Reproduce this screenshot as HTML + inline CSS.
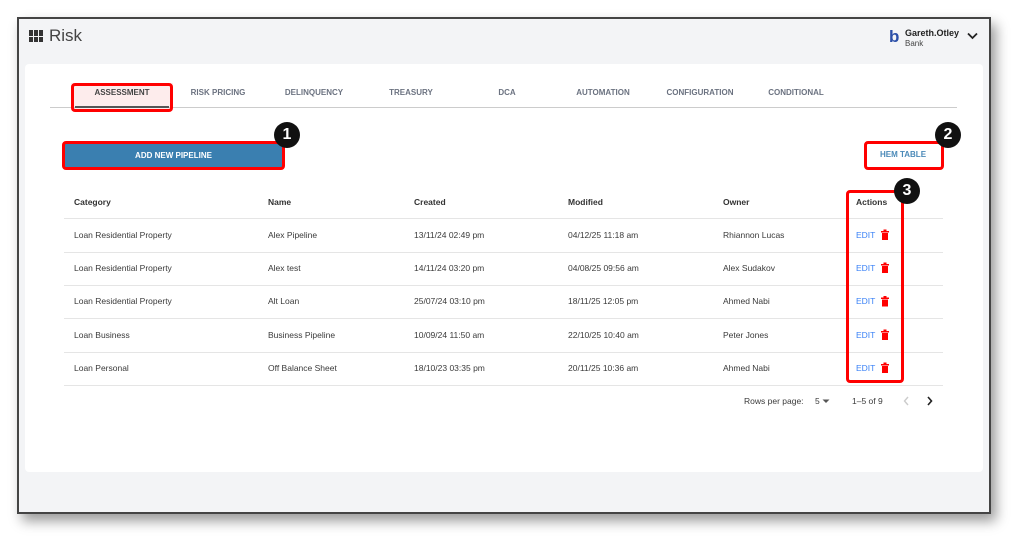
<!DOCTYPE html>
<html><head><meta charset="utf-8"><style>
*{box-sizing:border-box;margin:0;padding:0}
body{width:1024px;height:547px;background:#fff;font-family:"Liberation Sans",sans-serif;position:relative;overflow:hidden}
.a{position:absolute}
.frame{left:17px;top:17px;width:974px;height:497px;border:2px solid #444;background:#f3f4f6;box-shadow:5px 7px 12px rgba(0,0,0,.4)}
.card{left:25px;top:64px;width:958px;height:408px;background:#fff;border-radius:4px}
.tab{font-size:8px;font-weight:bold;color:#6b7280;width:96px;text-align:center;top:88px}
.t{font-size:8.5px;color:#3a3a3a}
.h{font-size:8.5px;font-weight:bold;color:#333}
.line{height:1px;background:#e5e5e5;left:64px;width:879px}
.red{border:3px solid #f00;border-radius:4px}
.badge{width:26px;height:26px;border-radius:50%;background:#111;color:#fff;font-weight:bold;font-size:16px;text-align:center;line-height:26px}
.edit{font-size:8.5px;color:#3b82f6;left:856px}
</style></head><body>
<div class="a frame"></div>
<div class="a" style="left:29px;top:30px;width:15px;height:12px;display:grid;grid-template-columns:repeat(3,4px);grid-gap:1px">
<i style="background:#333"></i><i style="background:#333"></i><i style="background:#333"></i><i style="background:#333"></i><i style="background:#333"></i><i style="background:#333"></i></div>
<div class="a" style="left:49px;top:26px;font-size:17px;color:#444">Risk</div>
<div class="a" style="left:889px;top:27px;font-size:17px;font-weight:bold;color:#2b4fa8">b</div>
<div class="a" style="left:905px;top:28px;font-size:9px;font-weight:bold;color:#222">Gareth.Otley</div>
<div class="a" style="left:905px;top:39px;font-size:8px;color:#444">Bank</div>
<svg class="a" style="left:967px;top:32px" width="11" height="8"><path d="M1 1.5L5.5 6L10 1.5" stroke="#222" stroke-width="1.8" fill="none"/></svg>
<div class="a card"></div>
<div class="a" style="left:71px;top:83px;width:102px;height:28px;background:#fdecec"></div>
<div class="a tab" style="left:74px;color:#444">ASSESSMENT</div>
<div class="a tab" style="left:170px">RISK PRICING</div>
<div class="a tab" style="left:266px">DELINQUENCY</div>
<div class="a tab" style="left:363px">TREASURY</div>
<div class="a tab" style="left:459px">DCA</div>
<div class="a tab" style="left:555px">AUTOMATION</div>
<div class="a tab" style="left:652px">CONFIGURATION</div>
<div class="a tab" style="left:748px">CONDITIONAL</div>
<div class="a" style="left:50px;top:107px;width:907px;height:1px;background:#ccc"></div>
<div class="a" style="left:75px;top:106px;width:94px;height:2px;background:#555"></div>
<div class="a red" style="left:71px;top:83px;width:102px;height:29px"></div>
<div class="a" style="left:65px;top:143px;width:217px;height:25px;background:#3a7fb0;color:#fff;font-size:8px;font-weight:bold;text-align:center;line-height:25px">ADD NEW PIPELINE</div>
<div class="a red" style="left:62px;top:141px;width:223px;height:29px"></div>
<div class="a badge" style="left:274px;top:122px">1</div>
<div class="a" style="left:864px;top:142px;width:78px;height:26px;color:#4b8ab8;font-size:8px;font-weight:bold;text-align:center;line-height:26px">HEM TABLE</div>
<div class="a red" style="left:864px;top:141px;width:80px;height:29px"></div>
<div class="a badge" style="left:935px;top:122px">2</div>
<div class="a h" style="left:74px;top:197px">Category</div>
<div class="a h" style="left:268px;top:197px">Name</div>
<div class="a h" style="left:414px;top:197px">Created</div>
<div class="a h" style="left:568px;top:197px">Modified</div>
<div class="a h" style="left:723px;top:197px">Owner</div>
<div class="a h" style="left:856px;top:197px">Actions</div>
<div class="a line" style="top:218px"></div>
<div class="a t" style="left:74px;top:230px">Loan Residential Property</div><div class="a t" style="left:268px;top:230px">Alex Pipeline</div><div class="a t" style="left:414px;top:230px">13/11/24 02:49 pm</div><div class="a t" style="left:568px;top:230px">04/12/25 11:18 am</div><div class="a t" style="left:723px;top:230px">Rhiannon Lucas</div><div class="a edit" style="top:230px">EDIT</div>
<div class="a line" style="top:252px"></div>
<div class="a t" style="left:74px;top:263px">Loan Residential Property</div><div class="a t" style="left:268px;top:263px">Alex test</div><div class="a t" style="left:414px;top:263px">14/11/24 03:20 pm</div><div class="a t" style="left:568px;top:263px">04/08/25 09:56 am</div><div class="a t" style="left:723px;top:263px">Alex Sudakov</div><div class="a edit" style="top:263px">EDIT</div>
<div class="a line" style="top:285px"></div>
<div class="a t" style="left:74px;top:296px">Loan Residential Property</div><div class="a t" style="left:268px;top:296px">Alt Loan</div><div class="a t" style="left:414px;top:296px">25/07/24 03:10 pm</div><div class="a t" style="left:568px;top:296px">18/11/25 12:05 pm</div><div class="a t" style="left:723px;top:296px">Ahmed Nabi</div><div class="a edit" style="top:296px">EDIT</div>
<div class="a line" style="top:318px"></div>
<div class="a t" style="left:74px;top:330px">Loan Business</div><div class="a t" style="left:268px;top:330px">Business Pipeline</div><div class="a t" style="left:414px;top:330px">10/09/24 11:50 am</div><div class="a t" style="left:568px;top:330px">22/10/25 10:40 am</div><div class="a t" style="left:723px;top:330px">Peter Jones</div><div class="a edit" style="top:330px">EDIT</div>
<div class="a line" style="top:352px"></div>
<div class="a t" style="left:74px;top:363px">Loan Personal</div><div class="a t" style="left:268px;top:363px">Off Balance Sheet</div><div class="a t" style="left:414px;top:363px">18/10/23 03:35 pm</div><div class="a t" style="left:568px;top:363px">20/11/25 10:36 am</div><div class="a t" style="left:723px;top:363px">Ahmed Nabi</div><div class="a edit" style="top:363px">EDIT</div>
<div class="a line" style="top:385px"></div>
<svg class="a" style="left:880px;top:229px" width="10" height="150">
<g fill="#f00"><rect x="1" y="2" width="8" height="1.5"/><rect x="3.5" y="0.5" width="3" height="1.5"/><rect x="2" y="4" width="6" height="7"/></g>
<g fill="#f00" transform="translate(0,33)"><rect x="1" y="2" width="8" height="1.5"/><rect x="3.5" y="0.5" width="3" height="1.5"/><rect x="2" y="4" width="6" height="7"/></g>
<g fill="#f00" transform="translate(0,66.5)"><rect x="1" y="2" width="8" height="1.5"/><rect x="3.5" y="0.5" width="3" height="1.5"/><rect x="2" y="4" width="6" height="7"/></g>
<g fill="#f00" transform="translate(0,100)"><rect x="1" y="2" width="8" height="1.5"/><rect x="3.5" y="0.5" width="3" height="1.5"/><rect x="2" y="4" width="6" height="7"/></g>
<g fill="#f00" transform="translate(0,133)"><rect x="1" y="2" width="8" height="1.5"/><rect x="3.5" y="0.5" width="3" height="1.5"/><rect x="2" y="4" width="6" height="7"/></g>
</svg>
<div class="a red" style="left:846px;top:190px;width:58px;height:193px"></div>
<div class="a badge" style="left:894px;top:178px">3</div>
<div class="a t" style="left:744px;top:396px">Rows per page:</div>
<div class="a t" style="left:815px;top:396px">5</div>
<svg class="a" style="left:822px;top:399px" width="8" height="5"><path d="M0.5 0.5L4 4L7.5 0.5Z" fill="#555"/></svg>
<div class="a t" style="left:852px;top:396px">1–5 of 9</div>
<svg class="a" style="left:903px;top:396px" width="6" height="10"><path d="M5 1L1.5 5L5 9" stroke="#ccc" stroke-width="1.4" fill="none"/></svg>
<svg class="a" style="left:927px;top:396px" width="6" height="10"><path d="M1 1L4.5 5L1 9" stroke="#222" stroke-width="1.6" fill="none"/></svg>
</body></html>
